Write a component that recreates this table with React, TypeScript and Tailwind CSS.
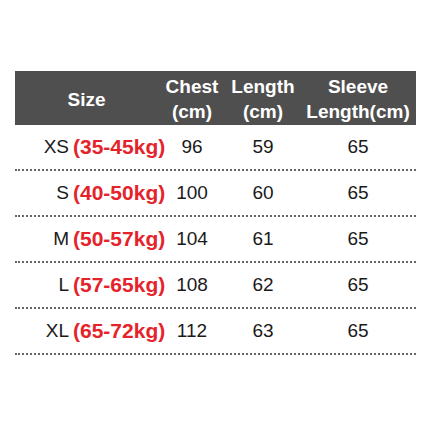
const ROWS = [
  { size: "XS", kg: "(35-45kg)", chest: "96", length: "59", sleeve: "65" },
  { size: "S", kg: "(40-50kg)", chest: "100", length: "60", sleeve: "65" },
  { size: "M", kg: "(50-57kg)", chest: "104", length: "61", sleeve: "65" },
  { size: "L", kg: "(57-65kg)", chest: "108", length: "62", sleeve: "65" },
  { size: "XL", kg: "(65-72kg)", chest: "112", length: "63", sleeve: "65" },
];

export default function App() {
  return (
    <div
      className="w-[430px] h-[430px] bg-white pt-[71px] pl-[15px]"
      style={{ fontFamily: '"Liberation Sans", Arial, sans-serif' }}
    >
      <div className="w-[401px]">
        {/* Header */}
        <div className="flex h-[54px] bg-[#4f4f4f] text-white font-bold text-[19px] leading-[25px]">
          <div className="w-[143px] flex items-center justify-center pt-[2px]">Size</div>
          <div className="w-[68px] flex flex-col items-center justify-center whitespace-nowrap pt-[2px]">
            <span>Chest</span>
            <span>(cm)</span>
          </div>
          <div className="w-[74px] flex flex-col items-center justify-center whitespace-nowrap pt-[2px]">
            <span>Length</span>
            <span>(cm)</span>
          </div>
          <div className="w-[116px] flex flex-col items-center justify-center whitespace-nowrap pt-[2px]">
            <span>Sleeve</span>
            <span>Length(cm)</span>
          </div>
        </div>

        {/* Rows */}
        {ROWS.map((r) => (
          <div
            key={r.size}
            className="flex h-[46px] border-b-2 border-dotted border-[#666] text-[19px] text-[#1a1a1a]"
          >
            <div className="w-[143px] shrink-0 flex items-center whitespace-nowrap">
              <span className="w-[54px] shrink-0 text-right">{r.size}</span>
              <span className="ml-[4px] shrink-0 font-bold text-[21px] text-[#e5232b]">{r.kg}</span>
            </div>
            <div className="w-[68px] shrink-0 flex items-center justify-center">{r.chest}</div>
            <div className="w-[74px] shrink-0 flex items-center justify-center">{r.length}</div>
            <div className="w-[116px] shrink-0 flex items-center justify-center">{r.sleeve}</div>
          </div>
        ))}
      </div>
    </div>
  );
}
